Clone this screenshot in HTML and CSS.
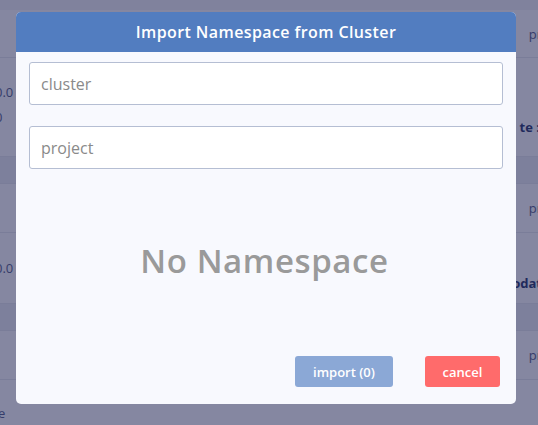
FILE: index.html
```html
<!DOCTYPE html>
<html>
<head>
<meta charset="utf-8">
<link rel="stylesheet" href="styles.css">
</head>
<body>
<div class="page">
  <div class="strip"></div>
  <div class="row r1"><span class="l"></span><span class="r">pr</span></div>
  <div class="row r2"><span class="l lines">0.0<br>0</span><span class="r bold">te :</span></div>
  <div class="band"></div>
  <div class="row r3"><span class="l"></span><span class="r">pr</span></div>
  <div class="row r4"><span class="l">0.0</span><span class="r bold low">odat</span></div>
  <div class="band"></div>
  <div class="row r5"><span class="l"></span><span class="r">pr</span></div>
  <div class="row r6"><span class="l">e</span></div>
</div>

<div class="modal">
  <div class="modal-head">Import Namespace from Cluster</div>
  <div class="modal-body">
    <input class="field" type="text" placeholder="cluster">
    <input class="field" type="text" placeholder="project">
    <div class="empty">No Namespace</div>
    <div class="actions">
      <button class="btn import">import (0)</button>
      <button class="btn cancel">cancel</button>
    </div>
  </div>
</div>
</body>
</html>
```

FILE: styles.css
```css
html, body {
  margin: 0;
  padding: 0;
  height: 100%;
  overflow: hidden;
}
body {
  background: #8587a1;
  font-family: "Open Sans", "DejaVu Sans", sans-serif;
  color: #2f3868;
}
.page {
  display: flex;
  flex-direction: column;
}
.strip {
  height: 10px;
  background: #80829d;
}
.row {
  display: flex;
  justify-content: space-between;
  align-items: center;
  border-bottom: 1px solid #7a7d99;
  font-size: 13px;
  color: #353c6a;
}
.row .l { margin-left: -5px; }
.row .r { margin-right: -4px; }
.lines { line-height: 25px; }
.bold { font-weight: 700; color: #1f2a5c; }
.r1 { height: 47px; }
.r2 { height: 98px; align-items: flex-start; }
.r2 .l { padding-top: 22px; }
.r2 .r { padding-top: 60px; margin-right: -2px; }
.band { height: 26px; background: #7d809c; border-bottom: 1px solid #7a7d99; }
.r3 { height: 48px; }
.r4 { height: 70px; }
.r4 .r { padding-top: 30px; }
.r5 { height: 48px; }
.r6 { height: 46px; border-bottom: none; }
.r6 .l { padding-top: 20px; margin-left: -2px; }

.modal {
  position: fixed;
  left: 16px;
  top: 12px;
  width: 500px;
  height: 392px;
  border-radius: 5px;
  overflow: hidden;
  background: #f8f9fe;
  display: flex;
  flex-direction: column;
}
.modal-head {
  height: 40px;
  background: #527dc0;
  color: #ffffff;
  font-size: 16px;
  font-weight: 600;
  display: flex;
  align-items: center;
  justify-content: center;
  letter-spacing: 0.4px;
}
.modal-body {
  flex: 1;
  display: flex;
  flex-direction: column;
  padding: 10px 16px 17px 13px;
}
.field {
  box-sizing: border-box;
  width: 474px;
  height: 43px;
  border: 1px solid #b5bed3;
  border-radius: 3px;
  background: #ffffff;
  padding: 0 11px;
  font-size: 16px;
  font-family: "Open Sans", sans-serif;
  color: #555;
  outline: none;
  margin: 0 0 21px 0;
}
.field::placeholder { color: #8a8a8a; }
.empty {
  flex: 1;
  display: flex;
  align-items: center;
  justify-content: center;
  font-size: 33px;
  font-weight: 600;
  letter-spacing: 0.6px;
  color: #9a9a9a;
  padding-bottom: 26px;
}
.actions {
  display: flex;
  justify-content: flex-end;
  gap: 32px;
}
.btn {
  height: 31px;
  border: none;
  border-radius: 3px;
  color: #ffffff;
  font-family: "Open Sans", sans-serif;
  font-size: 13px;
  font-weight: 600;
  padding: 0;
}
.import { width: 98px; background: #8ba8d6; }
.cancel { width: 75px; background: #ff6b6b; }
```
